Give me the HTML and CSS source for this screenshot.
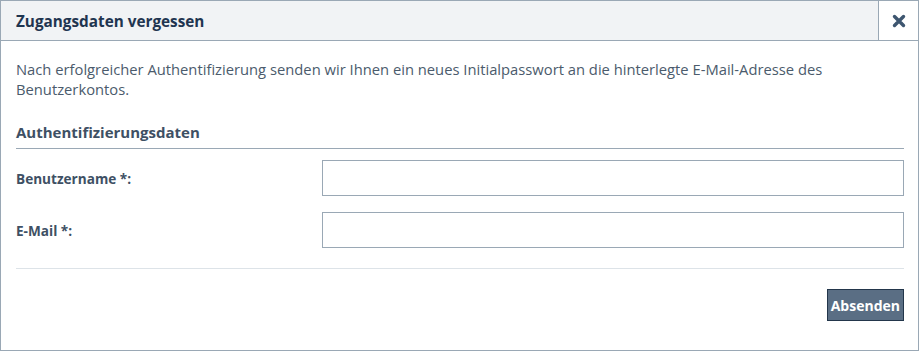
FILE: index.html
```html
<!DOCTYPE html>
<html lang="de">
<head>
<meta charset="utf-8">
<title>Zugangsdaten vergessen</title>
<link rel="stylesheet" href="styles.css">
</head>
<body>
<div class="dialog">
  <div class="dialog-header">
    <h1 class="dialog-title">Zugangsdaten vergessen</h1>
    <button class="dialog-close" type="button" aria-label="Schließen">
      <svg width="14" height="14" viewBox="0 0 14 14"><path d="M2.5 2.5 L11.5 11.5 M11.5 2.5 L2.5 11.5" stroke="#3e5670" stroke-width="3.4" stroke-linecap="round"/></svg>
    </button>
  </div>
  <div class="dialog-body">
    <p class="intro">Nach erfolgreicher Authentifizierung senden wir Ihnen ein neues Initialpasswort an die hinterlegte E-Mail-Adresse des Benutzerkontos.</p>
    <h2 class="section-title">Authentifizierungsdaten</h2>
    <div class="form-row">
      <label class="form-label" for="user">Benutzername *:</label>
      <input class="form-input" id="user" type="text">
    </div>
    <div class="form-row">
      <label class="form-label" for="mail">E-Mail *:</label>
      <input class="form-input" id="mail" type="text">
    </div>
    <div class="form-actions">
      <button class="btn-primary" type="button">Absenden</button>
    </div>
  </div>
</div>
</body>
</html>
```
FILE: styles.css
```css
* { box-sizing: border-box; }
html, body { margin: 0; padding: 0; background: #fff; }
body { font-family: "Open Sans", "DejaVu Sans", sans-serif; color: #4b5b6c; }
.dialog {
  width: 919px;
  height: 351px;
  border: 1px solid #9aa8b5;
  display: flex;
  flex-direction: column;
}
.dialog-header {
  height: 40px;
  background: #f1f3f5;
  border-bottom: 1px solid #9aa8b5;
  display: flex;
  align-items: center;
}
.dialog-title {
  flex: 1;
  margin: 0;
  padding-left: 15px;
  font-size: 15.3px;
  font-weight: 700;
  color: #1f3550;
}
.dialog-close {
  width: 40px;
  height: 39px;
  border: 0;
  border-left: 1px solid #9aa8b5;
  background: #fff;
  padding: 0;
  display: flex;
  align-items: center;
  justify-content: center;
}
.dialog-body { padding: 18px 14px 0 15px; flex: 1; }
.intro {
  margin: 0;
  font-size: 14.75px;
  line-height: 20px;
  color: #4b5b6c;
}
.section-title {
  margin: 23px 0 0;
  padding-bottom: 6px;
  font-size: 15px;
  font-weight: 700;
  color: #3e5064;
  border-bottom: 1px solid #9aa8b5;
  line-height: 20px;
}
.form-row {
  display: flex;
  align-items: center;
  margin-top: 11px;
}
.form-row + .form-row { margin-top: 16px; }
.form-label {
  width: 306px;
  font-size: 13.6px;
  font-weight: 700;
  color: #3e5064;
}
.form-input {
  flex: 1;
  height: 36px;
  border: 1px solid #9aa8b5;
  background: #fff;
  margin: 0;
}
.form-actions {
  margin-top: 20px;
  border-top: 1px solid #dde3e8;
  padding-top: 20px;
  display: flex;
  justify-content: flex-end;
}
.btn-primary {
  font-family: inherit;
  font-size: 14px;
  font-weight: 700;
  color: #fff;
  background: #5a6e84;
  border: 1px solid #23364b;
  height: 32px;
  padding: 0 3px;
  margin-right: 0;
}
```
